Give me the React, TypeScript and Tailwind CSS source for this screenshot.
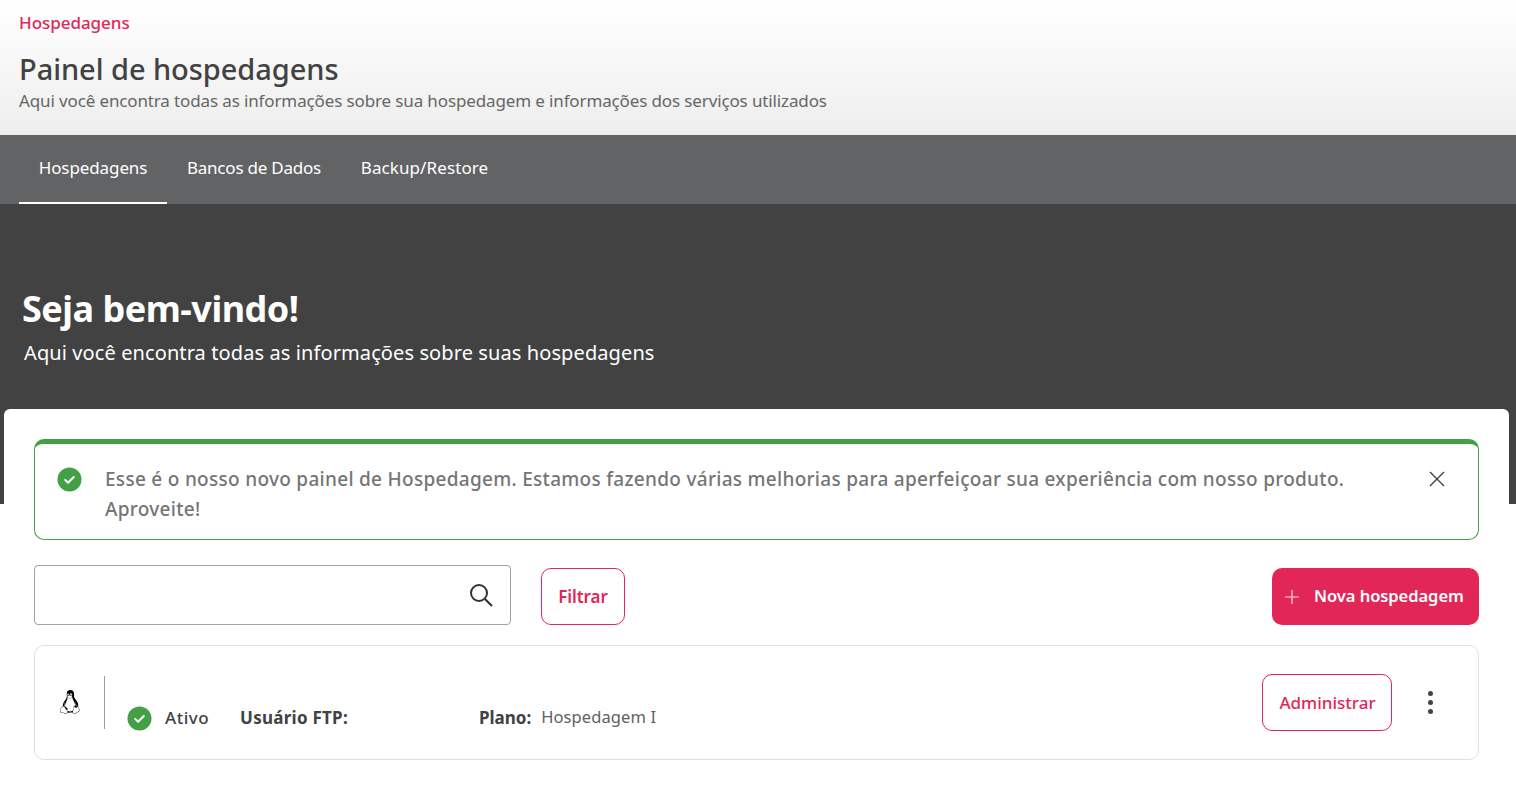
import { FaLinux } from "react-icons/fa";

const font = "font-['Noto_Sans','Open_Sans',sans-serif]";

function CheckBadge({ size }: { size: number }) {
  return (
    <svg width={size} height={size} viewBox="0 0 26 26" className="shrink-0">
      <circle cx="13" cy="13" r="12.5" fill="#43a047" />
      <path d="M8.5 13.4l3 3 6-6" fill="none" stroke="#fff" strokeWidth="2" strokeLinecap="round" strokeLinejoin="round" />
    </svg>
  );
}

export default function App() {
  return (
    <div className={`${font} min-h-[790px] bg-white`}>
      <header className="h-[135px] bg-gradient-to-b from-white to-[#eeeeee] px-[19px] pt-[12px]">
        <div className="text-[17px] leading-[22px] font-medium text-[#e32658] tracking-[-0.05px]">Hospedagens</div>
        <h1 className="mt-[13px] text-[29px] leading-[44px] font-medium text-[#424242] tracking-[-0.05px]">Painel de hospedagens</h1>
        <p className="-mt-[1px] text-[17px] leading-[22px] text-[#666666] tracking-[-0.13px]">
          Aqui você encontra todas as informações sobre sua hospedagem e informações dos serviços utilizados
        </p>
      </header>
      <nav className="flex h-[69px] bg-[#626365] pl-[19px] text-[17px] text-white">
        <a className="flex w-[148px] items-center justify-center border-b-2 border-white pb-[1px] tracking-[-0.1px]">Hospedagens</a>
        <a className="flex w-[174px] items-center justify-center pb-[3px] tracking-[-0.22px]">Bancos de Dados</a>
        <a className="flex w-[167px] items-center justify-center pb-[3px] tracking-[0.1px]">Backup/Restore</a>
      </nav>
      <section className="h-[300px] bg-[#424242] pl-[22px] pt-[80px] text-white">
        <h2 className="text-[36px] leading-[50px] font-bold tracking-[-0.5px]">Seja bem-vindo!</h2>
        <p className="ml-[2px] mt-[5px] text-[20px] leading-[28px] tracking-[0.1px]">Aqui você encontra todas as informações sobre suas hospedagens</p>
      </section>
      <main className="relative -mt-[95px] ml-[4px] mr-[7px] rounded-t-[6px] bg-white px-[30px] pt-[30px] pb-[30px]">
        <div className="flex h-[101px] items-start rounded-[10px] border border-[#43a047] border-t-[5px] bg-white pl-[22px] pr-[33px] pt-[20px]">
          <div className="mt-[3px] shrink-0"><CheckBadge size={25} /></div>
          <p className="ml-[23px] flex-1 text-[19px] leading-[30px] font-medium text-[#757575] tracking-[0.29px]">
            Esse é o nosso novo painel de Hospedagem. Estamos fazendo várias melhorias para aperfeiçoar sua experiência com nosso produto. Aproveite!
          </p>
          <svg width="16" height="16" viewBox="0 0 16 16" className="ml-[60px] mt-[7px] shrink-0">
            <path d="M1 1l14 14M15 1L1 15" stroke="#424242" strokeWidth="1.4" fill="none" />
          </svg>
        </div>
        <div className="mt-[25px] flex items-end">
          <div className="flex h-[60px] w-[477px] items-center justify-end rounded-[4px] border border-[#a0a0a0] pr-[17px]">
            <svg width="24" height="24" viewBox="0 0 24 24">
              <circle cx="10" cy="10" r="8" fill="none" stroke="#333" strokeWidth="2" />
              <path d="M16 16l7 7" stroke="#333" strokeWidth="2.2" />
            </svg>
          </div>
          <button className="ml-[30px] h-[57px] w-[84px] rounded-[10px] border border-[#e32658] text-[17px] font-semibold text-[#e32658] tracking-[-0.1px]">Filtrar</button>
          <button className="ml-auto flex h-[57px] w-[207px] items-center rounded-[10px] bg-[#e32658] pl-[12px] text-[16.5px] font-semibold text-white tracking-[-0.05px]">
            <svg width="16" height="16" viewBox="0 0 16 16" className="shrink-0">
              <path d="M8 1v14M1 8h14" stroke="#fff" strokeWidth="1.2" opacity="0.85" />
            </svg>
            <span className="ml-[14px]">Nova hospedagem</span>
          </button>
        </div>
        <div className="mt-[20px] flex h-[115px] items-center rounded-[10px] border border-[#e0e0e0] pr-[45px]">
          <div className="flex w-[69px] items-center justify-center pb-[1px] pl-[1px] text-black">
            <FaLinux size={24} />
          </div>
          <div className="h-[53px] w-px self-center bg-[#9b9ea6]" />
          <div className="ml-[22px] mt-[32px] flex items-center text-[#424242]">
            <CheckBadge size={25} />
            <span className="ml-[13px] pb-[2px] text-[17px] font-medium tracking-[0.5px]">Ativo</span>
            <span className="ml-[31px] pb-[2px] text-[17px] font-bold tracking-[0.25px]">Usuário FTP:</span>
            <span className="ml-[131px] pb-[2px] text-[17px] font-bold">Plano:</span>
            <span className="ml-[10px] pb-[2px] text-[16.5px] text-[#616161] tracking-[0.1px]">Hospedagem I</span>
          </div>
          <button className="ml-auto h-[57px] w-[130px] rounded-[10px] border border-[#e32658] pl-[1px] text-[17px] font-medium text-[#e32658]">Administrar</button>
          <div className="ml-[36px] flex flex-col gap-[4px]">
            <span className="h-[5px] w-[5px] rounded-full bg-[#424242]" />
            <span className="h-[5px] w-[5px] rounded-full bg-[#424242]" />
            <span className="h-[5px] w-[5px] rounded-full bg-[#424242]" />
          </div>
        </div>
      </main>
    </div>
  );
}
